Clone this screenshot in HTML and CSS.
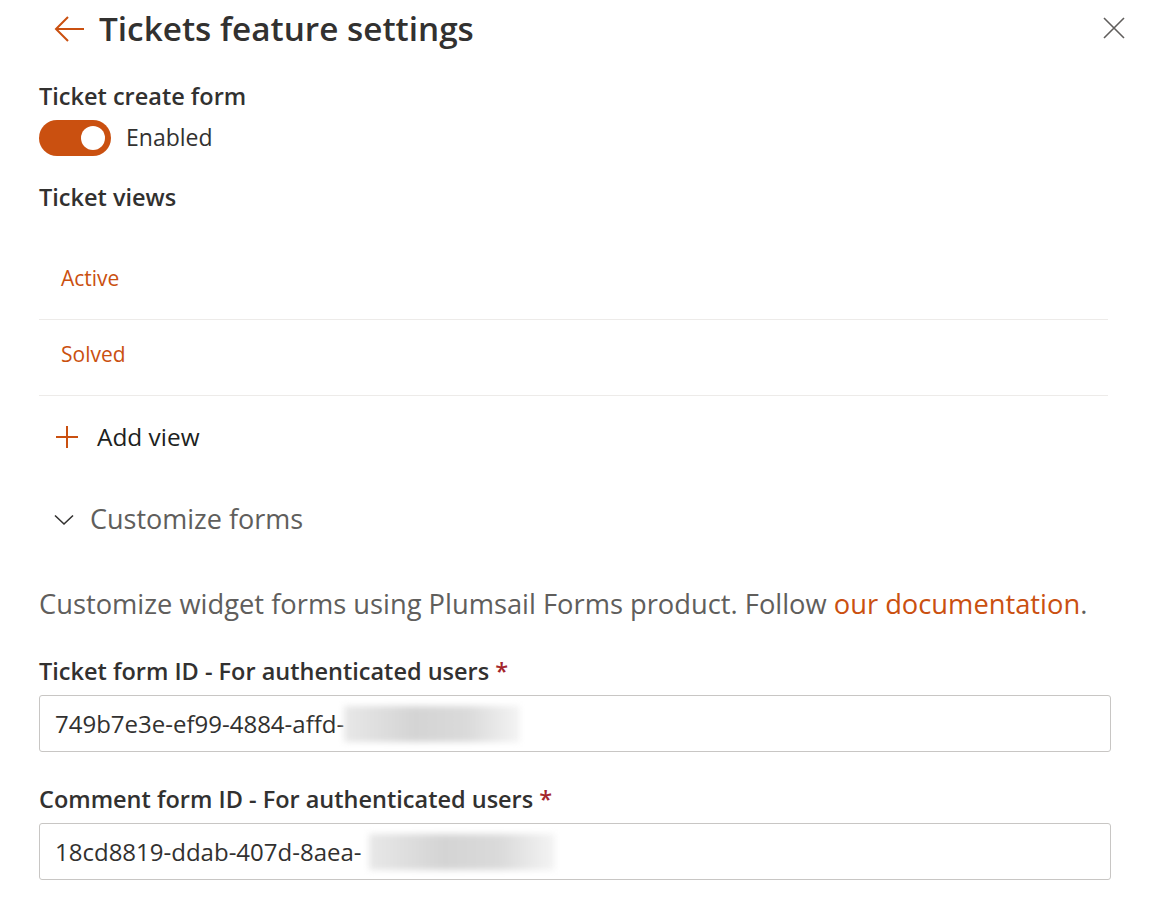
FILE: index.html
```html
<!DOCTYPE html>
<html>
    <head>
        <link rel="stylesheet" href="styles.css">
    </head>
    <body>
        <div class="panel">
            <div class="panel-header">
                <button class="back-button">
                    <svg width="31" height="28" viewBox="0 0 31 28">
                        <path d="M30 14 H2 M14 2 L2 14 L14 26" fill="none" stroke="#ca5010" stroke-width="2"/>
                    </svg>
                </button>
                <h1 class="panel-title">Tickets feature settings</h1>
                <button class="close-button">
                    <svg width="22" height="22" viewBox="0 0 22 22">
                        <path d="M1 1 L21 21 M21 1 L1 21" fill="none" stroke="#605e5c" stroke-width="1.6"/>
                    </svg>
                </button>
            </div>

            <div class="field-label">Ticket create form</div>
            <div class="toggle-row">
                <div class="toggle"><div class="toggle-thumb"></div></div>
                <span class="toggle-text">Enabled</span>
            </div>

            <div class="field-label views-label">Ticket views</div>
            <div class="view-list">
                <div class="view-item">Active</div>
                <div class="view-item">Solved</div>
            </div>
            <button class="add-view">
                <svg width="24" height="24" viewBox="0 0 24 24">
                    <path d="M12 1 V23 M1 12 H23" fill="none" stroke="#ca5010" stroke-width="2"/>
                </svg>
                <span>Add view</span>
            </button>

            <button class="section-toggle">
                <svg width="20" height="12" viewBox="0 0 20 12">
                    <path d="M1 1.5 L10 10 L19 1.5" fill="none" stroke="#323130" stroke-width="1.6"/>
                </svg>
                <span>Customize forms</span>
            </button>

            <p class="section-text">
                Customize widget forms using Plumsail Forms product. Follow
                <a href="#">our documentation</a>.
            </p>

            <div class="field-label form-label">Ticket form ID - For authenticated users <span class="required">*</span></div>
            <div class="text-field">
                <span>749b7e3e-ef99-4884-affd-</span><span class="blur blur-short"></span>
            </div>

            <div class="field-label form-label">Comment form ID - For authenticated users <span class="required">*</span></div>
            <div class="text-field">
                <span>18cd8819-ddab-407d-8aea-</span><span class="blur blur-long"></span>
            </div>
        </div>
    </body>
</html>
```

FILE: styles.css
```css
* {
    margin: 0;
    padding: 0;
    box-sizing: border-box;
    font-family: 'Segoe UI', 'Open Sans', sans-serif;
}

body {
    background: #fff;
    color: #323130;
}

button {
    background: none;
    border: none;
    cursor: pointer;
    color: inherit;
}

.panel {
    padding: 0 42px 0 39px;
}

.panel-header {
    display: flex;
    align-items: center;
    height: 57px;
    padding-left: 15px;
}

.back-button {
    display: flex;
    width: 45px;
}

.panel-title {
    flex: 1;
    font-size: 33.3px;
    font-weight: 600;
    line-height: 44px;
    color: #323130;
    margin-bottom: 2px;
}

.close-button {
    display: flex;
    margin-right: -14px;
    margin-bottom: 2px;
}

.field-label {
    font-size: 23.5px;
    font-weight: 600;
    color: #323130;
    line-height: 32px;
    margin-top: 23px;
}

.views-label {
    margin-top: 25px;
}

.required {
    color: #a4262c;
}

.toggle-row {
    display: flex;
    align-items: center;
    margin-top: 8px;
}

.toggle {
    width: 72px;
    height: 36px;
    border-radius: 18px;
    background: #ca5010;
    display: flex;
    align-items: center;
    justify-content: flex-end;
    padding-right: 6px;
}

.toggle-thumb {
    width: 24px;
    height: 24px;
    border-radius: 50%;
    background: #fff;
}

.toggle-text {
    font-size: 23px;
    line-height: 32px;
    margin-left: 15px;
    margin-bottom: 2px;
}

.view-list {
    margin-top: 31px;
    margin-right: 3px;
}

.view-item {
    height: 76px;
    display: flex;
    align-items: center;
    padding-left: 22px;
    padding-bottom: 8px;
    font-size: 21px;
    line-height: 28px;
    color: #ca5010;
    border-bottom: 1px solid #edebe9;
}

.add-view {
    display: flex;
    align-items: center;
    height: 82px;
    padding-left: 16px;
    font-size: 24.4px;
    line-height: 32px;
    color: #201f1e;
}

.add-view span {
    margin-left: 18px;
}

.section-toggle {
    display: flex;
    align-items: center;
    height: 84px;
    padding-left: 15px;
    font-size: 27px;
    line-height: 36px;
    color: #605e5c;
}

.section-toggle span {
    margin-left: 16px;
    margin-bottom: 2px;
}

.section-text {
    font-size: 27.3px;
    color: #605e5c;
    margin-top: 24px;
    line-height: 36px;
}

.section-text a {
    color: #ca5010;
    text-decoration: none;
}

.form-label {
    margin-top: 33px;
}

.text-field {
    height: 57px;
    border: 1px solid #c8c6c4;
    border-radius: 3px;
    margin-top: 8px;
    display: flex;
    align-items: center;
    padding-left: 15px;
    font-size: 24px;
    color: #323130;
}

.text-field + .field-label {
    margin-top: 31px;
}

.blur {
    display: inline-block;
    height: 36px;
    background: linear-gradient(90deg, #e8e8e8, #d4d4d4 40%, #dadada 70%, #f4f4f4);
    filter: blur(3px);
}

.blur-short {
    width: 176px;
}

.blur-long {
    width: 186px;
    margin-left: 7px;
}
```
